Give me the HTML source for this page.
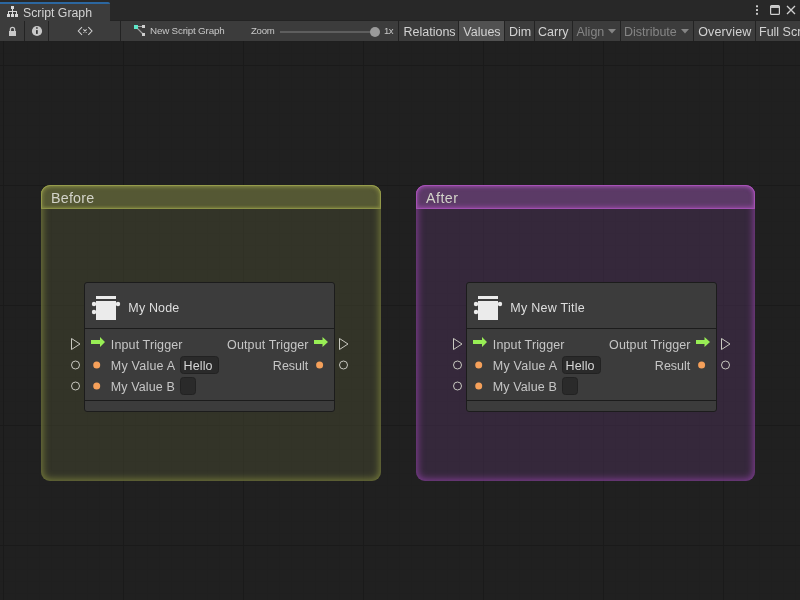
<!DOCTYPE html>
<html><head><meta charset="utf-8">
<style>
*{margin:0;padding:0;box-sizing:border-box}
html,body{width:800px;height:600px;overflow:hidden;background:#202020;font-family:"Liberation Sans",sans-serif}
.abs{position:absolute}
svg text{font-family:"Liberation Sans",sans-serif}
.nt{will-change:transform}
#top{position:absolute;left:0;top:0;width:800px;height:20px;background:#282828}
#tab{position:absolute;left:0;top:2px;width:110px;height:19px;background:#3c3c3c;border-top:2px solid #2c67a0;border-top-right-radius:2px;z-index:2}
#tabtxt{position:absolute;z-index:3;left:23px;top:6px;font-size:12.3px;color:#d2d2d2;white-space:nowrap;will-change:transform}
#tb{position:absolute;left:0;top:20px;width:800px;height:21px;background:#3c3c3c;border-top:1px solid #232323}
.div{position:absolute;top:21px;height:20px;width:1px;background:#232323}
.btn{position:absolute;top:21px;height:20px;font-size:12.5px;color:#d2d2d2;white-space:nowrap;line-height:20px;will-change:transform}
.dis{color:#858585}
#canvas{position:absolute;left:0;top:41px;width:800px;height:559px;background-color:#202020;
 background-image:
  linear-gradient(to right,#1a1a1a 1px,transparent 1px),
  linear-gradient(to bottom,#1a1a1a 1px,transparent 1px),
  linear-gradient(to right,#1f1f1f 1px,transparent 1px),
  linear-gradient(to bottom,#1f1f1f 1px,transparent 1px);
 background-size:120px 120px,120px 120px,12px 12px,12px 12px;
 background-position:3px 24px,3px 24px,3px 0px,3px 0px}
.grp{position:absolute;top:185px;height:296px;border-radius:9px;overflow:hidden}
.grp .hd{position:absolute;left:0;top:0;right:0;height:24px;border-radius:9px 9px 0 0}
.grp .ttl{position:absolute;left:10px;top:5px;font-size:14.3px;color:#d2d2c8;will-change:transform}
</style></head><body>
<div id="top"></div><div id="tab"></div>
<svg class="abs" style="left:6px;top:6px;z-index:3" width="13" height="11" viewBox="0 0 13 11">
 <g fill="#d8d8d8"><rect x="5" y="0" width="3" height="3"/><rect x="6" y="3" width="1" height="2"/><rect x="2" y="5" width="9" height="1"/><rect x="2" y="6" width="1" height="2"/><rect x="6" y="6" width="1" height="2"/><rect x="10" y="6" width="1" height="2"/><rect x="1" y="8" width="3" height="3"/><rect x="5" y="8" width="3" height="3"/><rect x="9" y="8" width="3" height="3"/></g>
</svg>
<div id="tabtxt">Script Graph</div>
<svg class="abs" style="left:750px;top:3px" width="50" height="16" viewBox="0 0 50 16">
 <g fill="#d0d0d0"><rect x="6" y="2.3" width="2" height="2" rx="0.5"/><rect x="6" y="6" width="2" height="2" rx="0.5"/><rect x="6" y="9.7" width="2" height="2" rx="0.5"/></g>
 <rect x="20.6" y="2.6" width="8.8" height="8.8" rx="1" fill="none" stroke="#d0d0d0" stroke-width="1.2"/>
 <rect x="21" y="3" width="8" height="2" fill="#c4c4c4"/>
 <path d="M37 3L45 11M45 3L37 11" stroke="#d0d0d0" stroke-width="1.3"/>
</svg>
<div id="tb"></div>
<div class="div" style="left:24px"></div>
<div class="div" style="left:48px"></div>
<div class="div" style="left:120px"></div>
<div class="div" style="left:398px"></div>
<div class="div" style="left:458px"></div>
<div class="div" style="left:504px"></div>
<div class="div" style="left:534px"></div>
<div class="div" style="left:572px"></div>
<div class="div" style="left:620px"></div>
<div class="div" style="left:693px"></div>
<div class="div" style="left:755px"></div>
<svg class="abs" style="left:0px;top:21px" width="100" height="20" viewBox="0 0 100 20">
 <path d="M10.4 10V8.5a2.1 2.1 0 0 1 4.2 0V10" fill="none" stroke="#c8c8c8" stroke-width="1.3"/>
 <rect x="9" y="10" width="7" height="5" fill="#c8c8c8"/>
 <circle cx="37" cy="10" r="5.1" fill="#c8c8c8"/>
 <rect x="36.1" y="6.3" width="1.6" height="1.4" fill="#2a2a2a"/>
 <rect x="36.1" y="9.1" width="1.6" height="3.8" fill="#2a2a2a"/>
 <g fill="none" stroke="#d0d0d0" stroke-width="1.05">
  <path d="M82 6.2L78.3 10L82 13.8"/><path d="M88.3 6.2L92 10L88.3 13.8"/>
  <path d="M83.4 8.4L86.6 11.6M86.6 8.4L83.4 11.6"/>
 </g>
</svg>
<svg class="abs" style="left:133px;top:24px" width="14" height="14" viewBox="0 0 14 14">
 <path d="M4 2.5H9.5M3.5 3.5L10.5 10.5" stroke="#a0a0a0" stroke-width="1.2"/>
 <rect x="1" y="1" width="4" height="4" fill="#5ee6c8"/>
 <rect x="9" y="1" width="3" height="3" fill="#cfcfcf"/>
 <rect x="9" y="9" width="3" height="3" fill="#cfcfcf"/>
</svg>
<div class="btn" style="left:150px;font-size:9.8px;letter-spacing:-0.18px;color:#c8c8c8;top:21px">New Script Graph</div>
<div class="btn" style="left:250.5px;top:21px;font-size:9.6px;letter-spacing:-0.25px;color:#c8c8c8">Zoom</div>
<div class="abs" style="left:280px;top:31px;width:94px;height:2px;background:#5e5e5e"></div>
<div class="abs" style="left:370px;top:27px;width:10px;height:10px;border-radius:50%;background:#9a9a9a"></div>
<div class="btn" style="left:383.8px;top:20.7px;font-size:9.6px;letter-spacing:-0.5px;color:#c8c8c8">1x</div>
<div class="btn" style="left:399px;width:59px;"><span style="position:absolute;left:4.5px;top:1px;font-size:12.5px">Relations</span></div>
<div class="btn" style="left:459px;width:45px;background:#515151;"><span style="position:absolute;left:4.3px;top:1px;font-size:12.5px">Values</span></div>
<div class="btn" style="left:505px;width:29px;"><span style="position:absolute;left:4px;top:1px;font-size:12.5px">Dim</span></div>
<div class="btn" style="left:535px;width:37px;"><span style="position:absolute;left:3px;top:1px;font-size:12.5px">Carry</span></div>
<div class="btn dis" style="left:573px;width:47px;"><span style="position:absolute;left:3.5px;top:1px;font-size:12.5px">Align</span></div>
<div class="btn dis" style="left:621px;width:72px;"><span style="position:absolute;left:3px;top:1px;font-size:12.5px">Distribute</span></div>
<div class="btn" style="left:694px;width:61px;"><span style="position:absolute;left:4.2px;top:1px;font-size:12.5px;letter-spacing:0.15px">Overview</span></div>
<div class="btn" style="left:756px;width:44px;"><span style="position:absolute;left:3px;top:1px;font-size:12.5px">Full Screen</span></div>
<svg class="abs" style="left:608px;top:28.8px" width="90" height="6" viewBox="0 0 90 6">
 <path d="M0 0H8L4 4.4Z" fill="#858585"/><path d="M73 0H81L77 4.4Z" fill="#858585"/>
</svg>
<div id="canvas"></div>
<div class="grp" style="left:41px;width:340px;background:rgba(70,72,48,0.5);box-shadow:inset 0 0 7px 2px rgba(122,128,60,0.85)">
 <div class="hd" style="background:#555834;box-shadow:inset 0 1px 0 #969c4c, inset 0 2px 4px rgba(146,152,74,0.6), inset 0 -1px 0 #8a9046, inset 0 -2px 3px rgba(136,142,68,0.5), inset 1px 0 0 #969c4c, inset -1px 0 0 #969c4c, inset 2px 0 4px rgba(146,152,74,0.5), inset -2px 0 4px rgba(146,152,74,0.5)"></div>
 <div class="ttl" style="letter-spacing:0.2px">Before</div>
</div>
<div class="grp" style="left:416px;width:339px;background:rgba(74,48,86,0.5);box-shadow:inset 0 0 7px 2px rgba(136,64,156,0.85)">
 <div class="hd" style="background:#5b3a66;box-shadow:inset 0 1px 0 #a652b6, inset 0 2px 4px rgba(166,82,182,0.6), inset 0 -1px 0 #a050b0, inset 0 -3px 4px rgba(160,80,176,0.5), inset 1px 0 0 #a652b6, inset -1px 0 0 #a652b6, inset 2px 0 4px rgba(166,82,182,0.5), inset -2px 0 4px rgba(166,82,182,0.5)"></div>
 <div class="ttl" style="letter-spacing:0.45px">After</div>
</div>
<svg class="abs nt" style="left:64px;top:282px" width="300" height="132" viewBox="0 0 300 132">
<rect x="20.5" y="0.5" width="250" height="129" rx="2.5" fill="#3c3c3c" stroke="#1c1c1c"/>
<rect x="21" y="46" width="249" height="1" fill="#1c1c1c"/>
<rect x="21" y="118" width="249" height="1" fill="#1c1c1c"/>
<g fill="#ebebeb"><rect x="32" y="14" width="20" height="3"/><rect x="32" y="19" width="20" height="19"/><circle cx="30" cy="22" r="2.2"/><circle cx="30" cy="30" r="2.2"/><circle cx="54" cy="22" r="2.2"/></g>
<text x="64.3" y="30" font-size="12.5" fill="#dedede" textLength="51" lengthAdjust="spacing">My Node</text>
<path d="M27 58h9v-3l5 5-5 5v-3h-9z" fill="#98ee55"/>
<path d="M250 58h8.5v-3l5.5 5-5.5 5v-3h-8.5z" fill="#98ee55"/>
<g font-size="12.5" fill="#c6c6c6"><text x="46.8" y="67" textLength="71.7">Input Trigger</text><text x="46.8" y="88" textLength="64.3">My Value A</text><text x="46.8" y="109" textLength="64">My Value B</text><text x="244.5" y="67" text-anchor="end" textLength="81.4">Output Trigger</text><text x="244.3" y="88" text-anchor="end">Result</text></g>
<g fill="#f5a05a"><circle cx="32.7" cy="83" r="3.5"/><circle cx="32.7" cy="104" r="3.5"/><circle cx="255.6" cy="83" r="3.5"/></g>
<rect x="116.5" y="74.5" width="38" height="17" rx="3" fill="#2a2a2a" stroke="#222"/>
<text x="119.5" y="88" font-size="12.5" fill="#d6d6d6" textLength="29">Hello</text>
<rect x="116.5" y="95.5" width="15" height="17" rx="3" fill="#2a2a2a" stroke="#222"/>
<g fill="none" stroke="#c8c8c0" stroke-width="1"><path d="M7.5 56.5L16 62L7.5 67.5Z"/><circle cx="11.5" cy="83" r="4"/><circle cx="11.5" cy="104" r="4"/><path d="M275.5 56.5L284 62L275.5 67.5Z"/><circle cx="279.5" cy="83" r="4"/></g>
</svg>
<svg class="abs nt" style="left:446px;top:282px" width="300" height="132" viewBox="0 0 300 132">
<rect x="20.5" y="0.5" width="250" height="129" rx="2.5" fill="#3c3c3c" stroke="#1c1c1c"/>
<rect x="21" y="46" width="249" height="1" fill="#1c1c1c"/>
<rect x="21" y="118" width="249" height="1" fill="#1c1c1c"/>
<g fill="#ebebeb"><rect x="32" y="14" width="20" height="3"/><rect x="32" y="19" width="20" height="19"/><circle cx="30" cy="22" r="2.2"/><circle cx="30" cy="30" r="2.2"/><circle cx="54" cy="22" r="2.2"/></g>
<text x="64.3" y="30" font-size="12.5" fill="#dedede" textLength="74.5" lengthAdjust="spacing">My New Title</text>
<path d="M27 58h9v-3l5 5-5 5v-3h-9z" fill="#98ee55"/>
<path d="M250 58h8.5v-3l5.5 5-5.5 5v-3h-8.5z" fill="#98ee55"/>
<g font-size="12.5" fill="#c6c6c6"><text x="46.8" y="67" textLength="71.7">Input Trigger</text><text x="46.8" y="88" textLength="64.3">My Value A</text><text x="46.8" y="109" textLength="64">My Value B</text><text x="244.5" y="67" text-anchor="end" textLength="81.4">Output Trigger</text><text x="244.3" y="88" text-anchor="end">Result</text></g>
<g fill="#f5a05a"><circle cx="32.7" cy="83" r="3.5"/><circle cx="32.7" cy="104" r="3.5"/><circle cx="255.6" cy="83" r="3.5"/></g>
<rect x="116.5" y="74.5" width="38" height="17" rx="3" fill="#2a2a2a" stroke="#222"/>
<text x="119.5" y="88" font-size="12.5" fill="#d6d6d6" textLength="29">Hello</text>
<rect x="116.5" y="95.5" width="15" height="17" rx="3" fill="#2a2a2a" stroke="#222"/>
<g fill="none" stroke="#c8c8c0" stroke-width="1"><path d="M7.5 56.5L16 62L7.5 67.5Z"/><circle cx="11.5" cy="83" r="4"/><circle cx="11.5" cy="104" r="4"/><path d="M275.5 56.5L284 62L275.5 67.5Z"/><circle cx="279.5" cy="83" r="4"/></g>
</svg>
</body></html>
